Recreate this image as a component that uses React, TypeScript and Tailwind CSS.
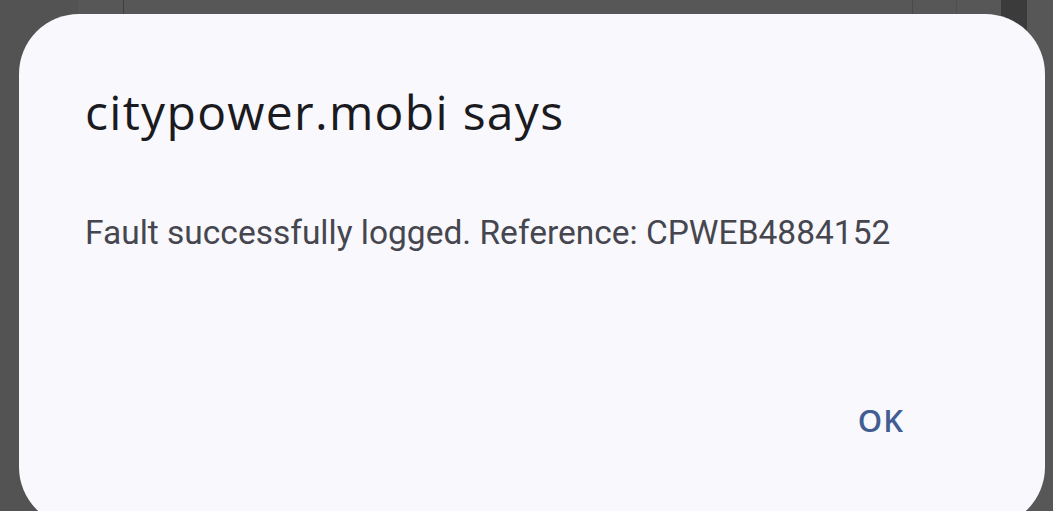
import React from "react";

export default function App() {
  return (
    <div className="relative w-[1053px] h-[511px] overflow-hidden bg-[#575757]" style={{ fontFamily: "Roboto, 'Noto Sans', sans-serif" }}>
      <div className="flex h-full">
        <div className="w-[78px] bg-[#535353]" />
        <div className="w-[45px] bg-[#575757]" />
        <div className="w-px bg-[#404040]" />
        <div className="w-[788px] bg-[#575757]" />
        <div className="w-px bg-[#4a4a4a]" />
        <div className="w-[43px] bg-[#575757]" />
        <div className="w-px bg-[#4f4f4f]" />
        <div className="w-[44px] bg-[#575757]" />
        <div className="w-[26px] bg-[#3b3b3b]" />
        <div className="flex-1 bg-[#575757]" />
      </div>
      <div className="absolute left-[19px] top-[14px] w-[1026px] h-[513px] rounded-[60px] bg-[#f8f8fd] flex flex-col">
        <h1 className="ml-[66px] mt-[70px] text-[48px] leading-[56px] text-[#1b1b1f] font-normal tracking-[1.3px] font-['Open_Sans',sans-serif]">
          citypower.mobi says
        </h1>
        <p className="ml-[66px] mt-[73px] text-[33.5px] leading-[40px] text-[#46464f]">
          Fault successfully logged. Reference: CPWEB4884152
        </p>
        <div className="flex justify-end mr-[141px] mt-[147px]">
          <span className="text-[31px] leading-[40px] font-semibold tracking-[1px] text-[#415d91] font-['Open_Sans',sans-serif]">OK</span>
        </div>
      </div>
    </div>
  );
}
